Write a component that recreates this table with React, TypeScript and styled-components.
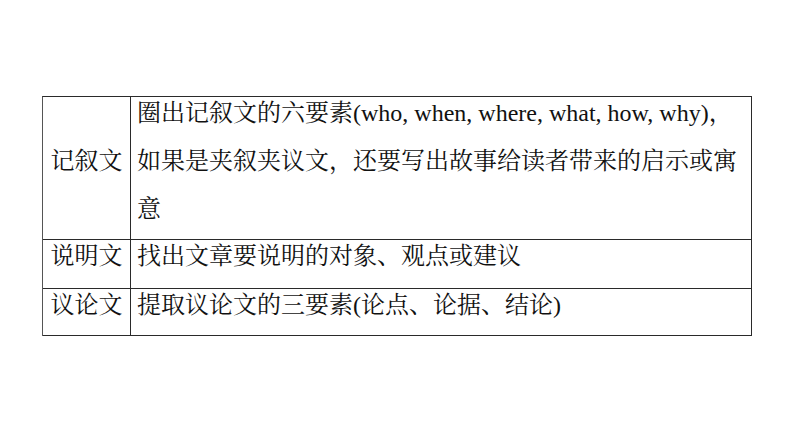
import React from "react";
import styled, { createGlobalStyle } from "styled-components";

const GlobalStyle = createGlobalStyle`
  html, body {
    margin: 0;
    padding: 0;
    background: #ffffff;
  }
`;

const Page = styled.div`
  width: 794px;
  height: 446px;
  padding: 96px 0 0 42px;
  box-sizing: border-box;
  background: #ffffff;
  font-family: "Liberation Serif", "Noto Serif CJK SC", "Noto Sans CJK SC", serif;
  color: #111111;
`;

const Table = styled.div`
  display: grid;
  grid-template-columns: 88px 621px;
  grid-template-rows: 143px 49px 47px;
  width: 710px;
  box-sizing: border-box;
  border-top: 1px solid #2a2a2a;
  border-left: 1px solid #555555;
`;

interface CellProps {
  $head?: boolean;
}

const Cell = styled.div<CellProps>`
  box-sizing: border-box;
  border-right: 1px solid #2a2a2a;
  border-bottom: 1px solid #2a2a2a;
  padding-left: ${(p) => (p.$head ? "0" : "6px")};
  text-align: ${(p) => (p.$head ? "center" : "left")};
  overflow: visible;
`;

interface TextProps {
  $lift: number;
}

const CellText = styled.p<TextProps>`
  margin: ${(p) => -p.$lift}px 0 0 0;
  font-size: 24px;
  line-height: 48px;
  white-space: nowrap;
`;

const rows = [
  {
    head: "记叙文",
    headLine: 1,
    lines: [
      "圈出记叙文的六要素(who, when, where, what, how, why)，",
      "如果是夹叙夹议文，还要写出故事给读者带来的启示或寓",
      "意",
    ],
  },
  { head: "说明文", headLine: 0, lines: ["找出文章要说明的对象、观点或建议"] },
  { head: "议论文", headLine: 0, lines: ["提取议论文的三要素(论点、论据、结论)"] },
];

const App = () => {
  return (
    <Page>
      <GlobalStyle />
      <Table>
        {rows.map((row) => (
          <React.Fragment key={row.head}>
            <Cell $head>
              <CellText $lift={8 - row.headLine * 48}>{row.head}</CellText>
            </Cell>
            <Cell>
              <CellText $lift={8}>
                {row.lines.map((line, i) => (
                  <React.Fragment key={i}>
                    {i > 0 && <br />}
                    {line}
                  </React.Fragment>
                ))}
              </CellText>
            </Cell>
          </React.Fragment>
        ))}
      </Table>
    </Page>
  );
};

export default App;
